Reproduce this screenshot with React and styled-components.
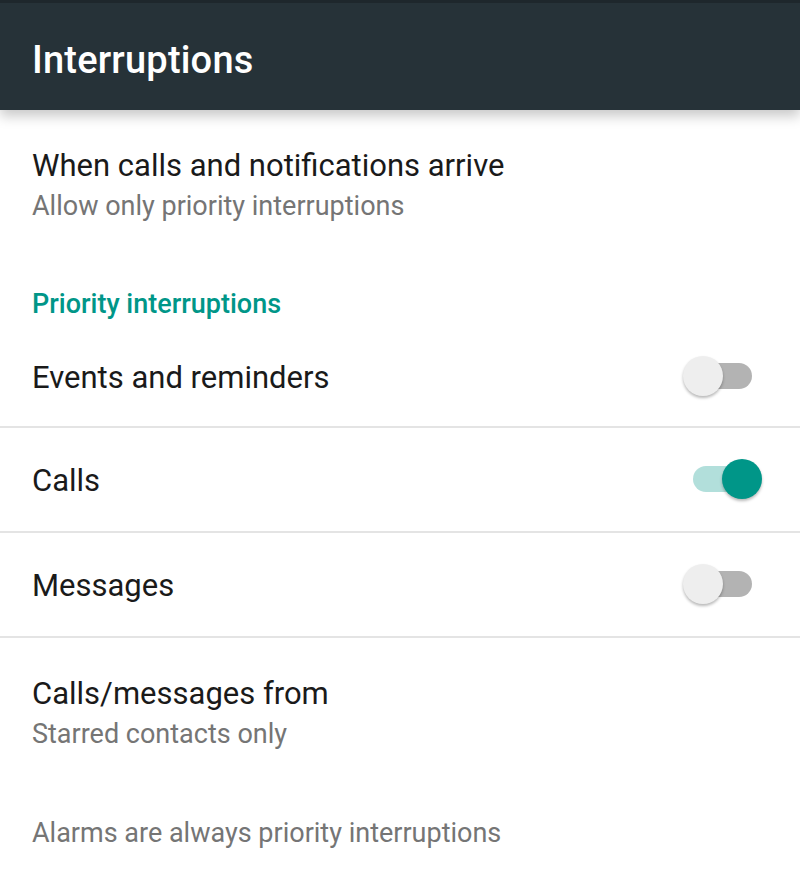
import React, { useState } from 'react';
import styled, { createGlobalStyle } from 'styled-components';

const GlobalStyle = createGlobalStyle`
  html, body {
    margin: 0;
    padding: 0;
    background: #ffffff;
  }
  body {
    font-family: Roboto, "Noto Sans", "Liberation Sans", sans-serif;
    -webkit-font-smoothing: antialiased;
  }
`;

const Screen = styled.div`
  width: 800px;
  height: 881px;
  overflow: hidden;
  background: #ffffff;
`;

const AppBar = styled.header`
  position: relative;
  z-index: 1;
  height: 110px;
  box-sizing: border-box;
  border-top: 3px solid #1e272c;
  background: #263238;
  display: flex;
  align-items: center;
  padding: 6px 32px 0;
  box-shadow: 0 6px 12px rgba(0, 0, 0, 0.22);
`;

const AppTitle = styled.h1`
  margin: 0;
  color: #ffffff;
  font-size: 38px;
  font-weight: 500;
  letter-spacing: 0.2px;
`;

const List = styled.div`
  display: flex;
  flex-direction: column;
`;

const TwoLineItem = styled.div`
  display: flex;
  flex-direction: column;
  justify-content: center;
  padding: 0 32px;
  height: ${(props) => props.$height}px;
  gap: 4px;
`;

const Primary = styled.div`
  color: #1a1a1a;
  font-size: 31px;
  line-height: 38px;
`;

const Secondary = styled.div`
  color: #757575;
  font-size: 27px;
  line-height: 34px;
`;

const SectionHeader = styled.div`
  display: flex;
  align-items: flex-end;
  height: 66px;
  box-sizing: border-box;
  padding: 0 32px 5px;
  color: #009688;
  font-size: 27px;
  font-weight: 500;
  line-height: 34px;
`;

const SwitchRow = styled.div`
  display: flex;
  align-items: center;
  justify-content: space-between;
  height: ${(props) => props.$height}px;
  padding: 3px 48px 0 32px;
  box-sizing: border-box;
  border-bottom: ${(props) => (props.$divider ? '2px solid #e4e4e4' : 'none')};
`;

const Track = styled.button`
  position: relative;
  width: 59px;
  height: 26px;
  margin-top: -4px;
  border: none;
  padding: 0;
  border-radius: 13px;
  cursor: pointer;
  background: ${(props) => (props.$on ? '#b2dfdb' : '#b3b3b3')};
`;

const Thumb = styled.span`
  position: absolute;
  top: -7px;
  left: ${(props) => (props.$on ? '29px' : '-10px')};
  width: 40px;
  height: 40px;
  border-radius: 50%;
  background: ${(props) => (props.$on ? '#009688' : '#eeeeee')};
  box-shadow: 0 2px 3px rgba(0, 0, 0, 0.28);
`;

const Footer = styled.div`
  display: flex;
  align-items: center;
  height: 90px;
  padding: 0 32px;
  color: #757575;
  font-size: 27px;
`;

const Switch = ({ on, onToggle }) => (
  <Track $on={on} onClick={onToggle} aria-pressed={on}>
    <Thumb $on={on} />
  </Track>
);

export default function App() {
  const [toggles, setToggles] = useState({
    events: false,
    calls: true,
    messages: false,
  });

  const rows = [
    { key: 'events', label: 'Events and reminders', height: 102 },
    { key: 'calls', label: 'Calls', height: 105 },
    { key: 'messages', label: 'Messages', height: 105 },
  ];

  return (
    <>
      <GlobalStyle />
      <Screen>
        <AppBar>
          <AppTitle>Interruptions</AppTitle>
        </AppBar>
        <List>
          <TwoLineItem $height={150}>
            <Primary>When calls and notifications arrive</Primary>
            <Secondary>Allow only priority interruptions</Secondary>
          </TwoLineItem>
          <SectionHeader>Priority interruptions</SectionHeader>
          {rows.map((row) => (
            <SwitchRow key={row.key} $height={row.height} $divider>
              <Primary>{row.label}</Primary>
              <Switch
                on={toggles[row.key]}
                onToggle={() =>
                  setToggles((t) => ({ ...t, [row.key]: !t[row.key] }))
                }
              />
            </SwitchRow>
          ))}
          <TwoLineItem $height={150}>
            <Primary>Calls/messages from</Primary>
            <Secondary>Starred contacts only</Secondary>
          </TwoLineItem>
          <Footer>Alarms are always priority interruptions</Footer>
        </List>
      </Screen>
    </>
  );
}
